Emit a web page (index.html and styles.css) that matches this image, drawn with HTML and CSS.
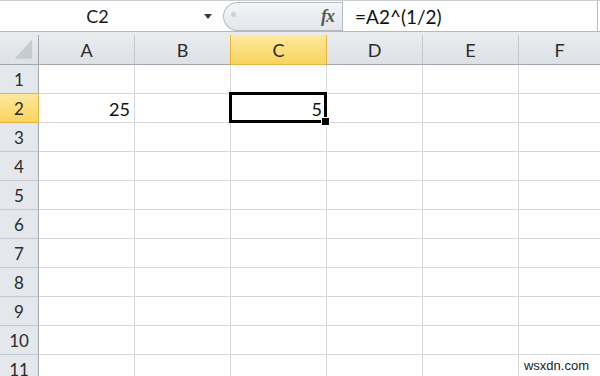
FILE: index.html
```html
<!DOCTYPE html>
<html>
<head>
<meta charset="utf-8">
<link rel="stylesheet" href="styles.css">
</head>
<body>
<div class="app">
  <div class="fbar">
    <div class="namebox">
      <span class="name">C2</span>
      <span class="arrow"></span>
    </div>
    <div class="pill">
      <span class="grip"></span>
      <span class="fx">fx</span>
    </div>
    <div class="formula">=A2^(1/2)</div>
  </div>
  <div class="band"></div>
  <div class="sheet">
    <div class="hd corner"><svg width="39" height="29" viewBox="0 0 39 29"><polygon points="33,4 15,24 33,24" fill="#c6cbd1"/></svg></div>
    <div class="hd col">A</div>
    <div class="hd col">B</div>
    <div class="hd col sel">C</div>
    <div class="hd col">D</div>
    <div class="hd col">E</div>
    <div class="hd col last">F</div>

    <div class="hd row">1</div><div class="c"></div><div class="c"></div><div class="c"></div><div class="c"></div><div class="c"></div><div class="c"></div>
    <div class="hd row sel">2</div><div class="c num">25</div><div class="c"></div><div class="c num active">5</div><div class="c"></div><div class="c"></div><div class="c"></div>
    <div class="hd row">3</div><div class="c"></div><div class="c"></div><div class="c"></div><div class="c"></div><div class="c"></div><div class="c"></div>
    <div class="hd row">4</div><div class="c"></div><div class="c"></div><div class="c"></div><div class="c"></div><div class="c"></div><div class="c"></div>
    <div class="hd row">5</div><div class="c"></div><div class="c"></div><div class="c"></div><div class="c"></div><div class="c"></div><div class="c"></div>
    <div class="hd row">6</div><div class="c"></div><div class="c"></div><div class="c"></div><div class="c"></div><div class="c"></div><div class="c"></div>
    <div class="hd row">7</div><div class="c"></div><div class="c"></div><div class="c"></div><div class="c"></div><div class="c"></div><div class="c"></div>
    <div class="hd row">8</div><div class="c"></div><div class="c"></div><div class="c"></div><div class="c"></div><div class="c"></div><div class="c"></div>
    <div class="hd row">9</div><div class="c"></div><div class="c"></div><div class="c"></div><div class="c"></div><div class="c"></div><div class="c"></div>
    <div class="hd row">10</div><div class="c"></div><div class="c"></div><div class="c"></div><div class="c"></div><div class="c"></div><div class="c"></div>
    <div class="hd row">11</div><div class="c"></div><div class="c"></div><div class="c"></div><div class="c"></div><div class="c"></div><div class="c"></div>
  </div>
  <div class="watermark">wsxdn.com</div>
</div>
</body>
</html>
```
FILE: styles.css
```css
* { box-sizing: border-box; }
html, body { margin: 0; padding: 0; }
body {
  width: 600px;
  height: 376px;
  overflow: hidden;
  background: #fff;
  font-family: Lato, "Open Sans", sans-serif;
  color: #222;
}
.app { position: relative; width: 600px; height: 376px; overflow: hidden; }

.fbar {
  display: flex;
  height: 32px;
  border-top: 1px solid #c9ced4;
  border-bottom: 1px solid #b3b9c0;
  background: #fff;
}
.namebox {
  width: 223px;
  display: flex;
  align-items: center;
  position: relative;
}
.name {
  width: 195px;
  text-align: center;
  font-size: 18px;
  color: #1a1a1a;
}
.arrow {
  width: 0; height: 0;
  margin-left: 9px;
  border-left: 4px solid transparent;
  border-right: 4px solid transparent;
  border-top: 5px solid #3c3c3c;
}
.pill {
  width: 119px;
  display: flex;
  align-items: center;
  justify-content: space-between;
  padding: 0 8px 0 7px;
  margin-top: 1px;
  height: 29px;
  border: 1px solid #b5bbc3;
  border-right: none;
  border-radius: 15px 0 0 15px;
  background: linear-gradient(#f3f5f7, #e3e6ea);
}
.grip {
  width: 5px; height: 5px;
  border-radius: 2px;
  background: #cdd1d6;
  margin-top: -4px;
}
.fx {
  font-family: "Liberation Serif", "DejaVu Serif", serif;
  font-style: italic;
  font-weight: bold;
  font-size: 18px;
  color: #55595e;
  letter-spacing: -1px;
}
.formula {
  flex: 1;
  margin-right: 2px;
  border-left: 1px solid #b5bbc3;
  border-right: 1px solid #b5bbc3;
  padding-left: 12px;
  display: flex;
  align-items: center;
  font-size: 19px;
  color: #111;
}
.band {
  height: 3px;
  background: #e8eaed;
}

.sheet {
  display: grid;
  grid-template-columns: 39px repeat(5, 96px) 81px;
  grid-template-rows: 30px;
  grid-auto-rows: 29px;
}
.hd {
  display: flex;
  align-items: center;
  justify-content: center;
  font-size: 17px;
  color: #2b2b2b;
  background: linear-gradient(#e9ecef, #dde0e4);
  border-right: 1px solid #c3c8ce;
  border-bottom: 1px solid #c3c8ce;
}
.hd.col { border-bottom-color: #9fa7b0; padding-top: 1px; font-size: 18px; }
.hd.corner { border-right-color: #9fa7b0; border-bottom-color: #9fa7b0; align-items: flex-start; justify-content: flex-start; }
.hd.corner svg { display: block; }
.hd.row {
  border-right-color: #9fa7b0;
  background: #e4e7eb;
  padding-top: 1px;
}
.hd.last { border-right: none; }
.hd.sel {
  background: linear-gradient(#fee9a0, #f9d35c);
  border-right-color: #e9b33e;
  border-bottom-color: #e9b33e;
}
.hd.col.sel { border-left: 1px solid #e9b33e; margin-left: -1px; }
.hd.row.sel { border-top: 1px solid #e9b33e; margin-top: -1px; }

.c {
  border-right: 1px solid #d6d8da;
  border-bottom: 1px solid #d6d8da;
  font-size: 18px;
  color: #111;
}
.c:nth-child(7n) { border-right: none; }
.num {
  display: flex;
  align-items: center;
  justify-content: flex-end;
  padding-right: 4px;
  padding-top: 2px;
}
.active { position: relative; z-index: 2; }
.active::before {
  content: "";
  position: absolute;
  left: -2px; top: -2px; right: -1px; bottom: -1px;
  border: 3px solid #000;
}
.active::after {
  content: "";
  position: absolute;
  right: -4px; bottom: -4px;
  width: 7px; height: 7px;
  background: #000;
  border: 1px solid #fff;
}
.watermark {
  position: absolute;
  right: 11px;
  bottom: 3px;
  font-family: "Liberation Sans", Arial, sans-serif;
  font-size: 13px;
  color: #222;
}
```
